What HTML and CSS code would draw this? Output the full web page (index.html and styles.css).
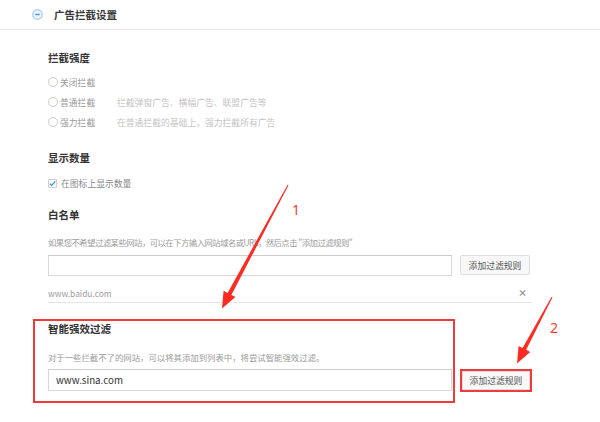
FILE: index.html
```html
<!DOCTYPE html>
<html lang="zh-CN">
<head>
  <meta charset="UTF-8">
  <title>广告拦截设置</title>
  <link rel="stylesheet" href="styles.css">
</head>
<body>

<header class="topbar">
  <svg class="fold-icon" width="11" height="11" viewBox="0 0 11 11">
    <circle cx="5.5" cy="5.5" r="4.8" fill="#eaf3fe" stroke="#a9cdf7" stroke-width="1.2"/>
    <line x1="3.2" y1="5.5" x2="7.8" y2="5.5" stroke="#4d94ee" stroke-width="1.3"/>
  </svg>
  <span class="topbar-title">广告拦截设置</span>
</header>

<main class="settings">

  <section class="block">
    <h3>拦截强度</h3>
    <ul class="options">
      <li><span class="radio"></span><span class="opt-name">关闭拦截</span></li>
      <li><span class="radio"></span><span class="opt-name">普通拦截</span><span class="opt-desc">拦截弹窗广告、横幅广告、联盟广告等</span></li>
      <li><span class="radio"></span><span class="opt-name">强力拦截</span><span class="opt-desc">在普通拦截的基础上，强力拦截所有广告</span></li>
    </ul>
  </section>

  <section class="block count">
    <h3>显示数量</h3>
    <label class="check-row">
      <span class="checkbox">
        <svg width="9" height="9" viewBox="0 0 9 9"><path d="M1.8 4.6 L3.7 6.4 L7.3 2.4" fill="none" stroke="#3d8ae6" stroke-width="1.3"/></svg>
      </span>
      在图标上显示数量
    </label>
  </section>

  <section class="block whitelist">
    <h3>白名单</h3>
    <p class="hint tight">如果您不希望过滤某些网站，可以在下方输入网站域名或URL，然后点击 "添加过滤规则"</p>
    <div class="input-row">
      <input type="text" class="field">
      <button class="btn">添加过滤规则</button>
    </div>
    <div class="rule-item">
      <span>www.baidu.com</span>
      <span class="remove">×</span>
    </div>
  </section>

  <section class="smart">
    <div class="smart-box">
      <h3>智能强效过滤</h3>
      <p class="hint">对于一些拦截不了的网站，可以将其添加到列表中，将尝试智能强效过滤。</p>
      <input type="text" class="field tall" value="www.sina.com">
    </div>
    <div class="btn-mark">
      <button class="btn">添加过滤规则</button>
    </div>
  </section>

</main>

<!-- 标注箭头 -->
<svg class="marks" width="600" height="422" viewBox="0 0 600 422">
  <polygon fill="#ff2a22" points="288.5,185.2 231.4,294.9 235.4,297.0 222,308.5 223.6,290.8 227.6,292.9 287.6,184.8"/>
  <polygon fill="#ff2a22" points="552.5,297.2 526.2,349.8 530.2,351.9 517,363.5 518.6,345.9 522.6,348.0 551.6,296.8"/>
  <text class="mark-num" x="292" y="215">1</text>
  <text class="mark-num" x="550" y="333">2</text>
</svg>

</body>
</html>
```

FILE: styles.css
```css
body {
  margin: 0;
  position: relative;
  font-family: "Noto Sans CJK SC", "Noto Sans", sans-serif;
  background-color: #fff;
  color: #333;
}
.topbar {
  display: flex;
  align-items: center;
  height: 29px;
  padding-left: 32px;
  border-bottom: 1px solid #e8e8e8;
}
.fold-icon {
  display: block;
}
.topbar-title {
  margin-left: 11px;
  font-size: 10.5px;
  font-weight: bold;
  color: #3a3a3a;
}
.settings {
  padding: 21px 0 0 48px;
  width: 484px;
}
h3 {
  margin: 0;
  font-size: 10.5px;
  line-height: 14px;
  font-weight: bold;
  color: #333;
}
.options {
  list-style: none;
  margin: 7px 0 0;
  padding: 0;
}
.options li {
  display: flex;
  align-items: center;
  height: 20px;
  font-size: 8.8px;
}
.radio {
  width: 10px;
  height: 10px;
  box-sizing: border-box;
  border: 1px solid #cfcfcf;
  border-radius: 50%;
  background: #fff;
}
.opt-name {
  width: 57px;
  margin-left: 2px;
  color: #9a9a9a;
}
.opt-desc {
  color: #c4c4c4;
}
.count {
  margin-top: 19px;
}
.check-row {
  display: flex;
  align-items: center;
  height: 20px;
  margin-top: 8px;
  font-size: 8.8px;
  color: #8a8a8a;
}
.checkbox {
  display: flex;
  width: 9px;
  height: 9px;
  box-sizing: border-box;
  border: 1px solid #cdcdcd;
  border-radius: 1px;
  margin-right: 4px;
  align-items: center;
  justify-content: center;
}
.checkbox svg {
  display: block;
  margin: -1px;
}
.whitelist {
  margin-top: 15px;
}
.hint {
  margin: 13px 0 0;
  font-size: 8.4px;
  line-height: 14px;
  color: #9a9a9a;
  white-space: nowrap;
}
.hint.tight {
  letter-spacing: -0.55px;
}
.input-row {
  display: flex;
  gap: 8px;
  margin-top: 6px;
}
.field {
  width: 404px;
  height: 21px;
  box-sizing: border-box;
  margin: 0;
  padding: 0 7px;
  border: 1px solid #d8d8d8;
  border-top-color: #cdcdcd;
  border-radius: 0;
  font-family: "Noto Sans CJK SC", "Noto Sans", sans-serif;
  font-size: 9.8px;
  color: #333;
  outline: none;
}
.field.tall {
  height: 22px;
  margin-top: 5px;
  display: block;
}
.btn {
  width: 70px;
  height: 20px;
  box-sizing: border-box;
  padding: 0;
  border: 1px solid #dcdcdc;
  border-radius: 2px;
  background: #f8f8f8;
  font-family: "Noto Sans CJK SC", "Noto Sans", sans-serif;
  font-size: 8.8px;
  color: #555;
}
.rule-item {
  display: flex;
  justify-content: space-between;
  align-items: center;
  height: 20px;
  box-sizing: border-box;
  margin-top: 7px;
  padding-right: 5px;
  border-bottom: 1px solid #e6e6e6;
  font-size: 8.4px;
  color: #9c9c9c;
}
.remove {
  font-size: 9px;
  font-weight: bold;
  color: #888;
}
.smart {
  display: flex;
  align-items: flex-end;
  margin-top: 16px;
}
.smart-box {
  width: 422px;
  box-sizing: border-box;
  margin-left: -15px;
  padding: 1px 1px 10px 13px;
  border: 2px solid #f23a3a;
}
.smart-box h3 {
  line-height: 14px;
}
.smart-box .hint {
  margin-top: 14px;
}
.btn-mark {
  display: flex;
  margin: 0 0 11px 5px;
  border: 2px solid #f23a3a;
}
.btn-mark .btn {
  width: 68px;
  height: 19px;
  border-radius: 0;
}
.marks {
  position: absolute;
  top: 0;
  left: 0;
  pointer-events: none;
}
.mark-num {
  font-family: "Noto Sans", sans-serif;
  font-size: 14px;
  fill: #ff3a30;
}
```
